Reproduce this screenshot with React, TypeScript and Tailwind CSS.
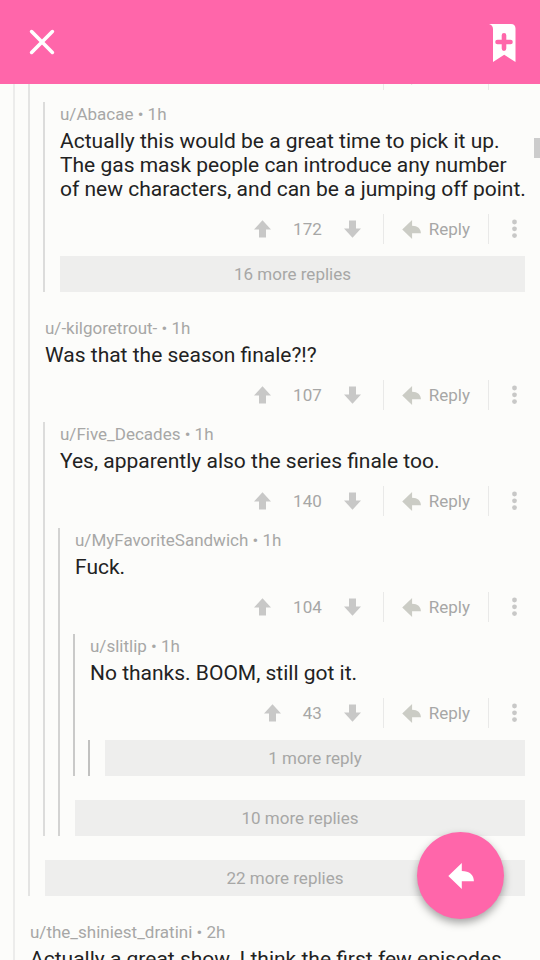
import React from "react";

type CommentData = {
  user: string;
  age: string;
  text: string;
  score: number;
  collapsed?: string;
  replies?: Item[];
};

type Item = CommentData | { more: string };

const gasMaskReplies: Item[] = [
  {
    user: "Abacae",
    age: "1h",
    text: "Actually this would be a great time to pick it up. The gas mask people can introduce any number of new characters, and can be a jumping off point.",
    score: 172,
    collapsed: "16 more replies",
  },
];

const finaleThread: Item[] = [
  {
    user: "-kilgoretrout-",
    age: "1h",
    text: "Was that the season finale?!?",
    score: 107,
    replies: [
      {
        user: "Five_Decades",
        age: "1h",
        text: "Yes, apparently also the series finale too.",
        score: 140,
        replies: [
          {
            user: "MyFavoriteSandwich",
            age: "1h",
            text: "Fuck.",
            score: 104,
            replies: [
              {
                user: "slitlip",
                age: "1h",
                text: "No thanks. BOOM, still got it.",
                score: 43,
                replies: [{ more: "1 more reply" }],
              },
            ],
          },
          { more: "10 more replies" },
        ],
      },
    ],
  },
  { more: "22 more replies" },
];

const nextThread: Item[] = [
  {
    user: "the_shiniest_dratini",
    age: "2h",
    text: "Actually a great show. I think the first few episodes",
    score: 58,
  },
];

const lineColors = [
  "border-[#ececeb]",
  "border-[#e4e4e3]",
  "border-[#dcdcdb]",
  "border-[#d3d3d2]",
  "border-[#cacac9]",
  "border-[#c1c1c0]",
];

function ArrowIcon({ down = false }: { down?: boolean }) {
  return (
    <svg
      viewBox="0 0 17 18"
      className={down ? "h-[18px] w-[17px] rotate-180" : "h-[18px] w-[17px]"}
      fill="currentColor"
      aria-hidden="true"
    >
      <path d="M8.5 0.2 17 9.4h-5V17.6H5V9.4H0z" />
    </svg>
  );
}

function ReplyIcon({ className }: { className: string }) {
  return (
    <svg viewBox="0 0 26 26" className={className} fill="currentColor" aria-hidden="true">
      <path d="M0.300 13 13.800 0v7.900C21.500 7.900 25.900 12 25.900 18.200H13.800V26z" />
    </svg>
  );
}

function Actions({ score }: { score: number }) {
  return (
    <div className="flex h-[30px] items-stretch justify-end text-[17px] leading-[30px] text-[#a7a7a6]">
      <div className="mr-[22px] flex items-center gap-[22px]">
        <button type="button" aria-label="Upvote" className="text-[#c8c8c7]">
          <ArrowIcon />
        </button>
        <span>{score}</span>
        <button type="button" aria-label="Downvote" className="text-[#c8c8c7]">
          <ArrowIcon down />
        </button>
      </div>
      <button
        type="button"
        className="flex items-center gap-2 border-x border-[#e9e9e8] px-[18px]"
      >
        <ReplyIcon className="h-[19px] w-[19px] text-[#cbccc5]" />
        Reply
      </button>
      <button
        type="button"
        aria-label="More options"
        className="flex w-[51px] items-center justify-center text-[#c8c8c7]"
      >
        <svg viewBox="0 0 5 20" className="h-5 w-[5px]" fill="currentColor" aria-hidden="true">
          <circle cx="2.5" cy="3" r="2.4" />
          <circle cx="2.5" cy="9.8" r="2.4" />
          <circle cx="2.5" cy="16.6" r="2.4" />
        </svg>
      </button>
    </div>
  );
}

function MoreButton({ label }: { label: string }) {
  return (
    <div className="px-[15px]">
      <button
        type="button"
        className="block h-9 w-full bg-[#eeeeed] text-center text-[17px] leading-9 text-[#a7a7a6]"
      >
        {label}
      </button>
    </div>
  );
}

function Comment({ user, age, text, score }: CommentData) {
  return (
    <article className="pb-3">
      <div className="mb-[13px] pr-3 pl-[15px]">
        <p className="mb-[3px] text-[17px] leading-6 text-[#a7a7a6]">
          u/{user} • {age}
        </p>
        <p className="text-[21px] leading-6 text-[#222222]">{text}</p>
      </div>
      <Actions score={score} />
    </article>
  );
}

function Branch({ depth, children }: { depth: number; children: React.ReactNode }) {
  return (
    <div className={`ml-[13px] flex flex-col gap-6 border-l-2 ${lineColors[depth]}`}>
      {children}
    </div>
  );
}

function Items({ items, depth }: { items: Item[]; depth: number }) {
  return (
    <>
      {items.map((item) =>
        "more" in item ? (
          <MoreButton key={item.more} label={item.more} />
        ) : (
          <div key={item.user}>
            <Comment {...item} />
            {item.collapsed && <MoreButton label={item.collapsed} />}
            {item.replies && (
              <Branch depth={depth + 1}>
                <Items items={item.replies} depth={depth + 1} />
              </Branch>
            )}
          </div>
        ),
      )}
    </>
  );
}

export default function App() {
  return (
    <div className="relative flex h-screen flex-col overflow-hidden bg-[#fcfcfa] font-[Roboto,sans-serif]">
      <header className="z-10 flex h-21 shrink-0 items-center justify-between bg-[#ff66aa] pr-6 pl-[29px] text-white">
        <button type="button" aria-label="Close">
          <svg
            viewBox="0 0 26 26"
            className="size-[26px]"
            stroke="currentColor"
            strokeWidth="3.6"
            strokeLinecap="round"
            aria-hidden="true"
          >
            <path d="M2.6 2.6 23.4 23.4M23.4 2.6 2.6 23.4" />
          </svg>
        </button>
        <button type="button" aria-label="Save thread">
          <svg viewBox="0 0 28 40" className="h-10 w-7" aria-hidden="true">
            <path
              d="M1 2H23C26 2 27.500 3.800 27.500 6.500V40L16.200 32.800 5 40V7C5 4.500 3.500 2.600 1 2z"
              fill="currentColor"
            />
            <path
              d="M16 13.200v13.400M9.500 20h13"
              stroke="#ff66aa"
              strokeWidth="4.600"
              strokeLinecap="round"
            />
          </svg>
        </button>
      </header>

      <main className="min-h-0 flex-1 overflow-hidden">
        <Branch depth={0}>
          <Branch depth={1}>
            <div>
              <div className="-mt-6 pb-3">
                <Actions score={216} />
              </div>
              <Branch depth={2}>
                <Items items={gasMaskReplies} depth={2} />
              </Branch>
            </div>
            <Items items={finaleThread} depth={1} />
          </Branch>
          <Items items={nextThread} depth={0} />
        </Branch>
      </main>

      <div className="absolute top-[138px] right-0 h-5 w-[6px] bg-[#cccccc]" />

      <button
        type="button"
        aria-label="Reply to post"
        className="absolute right-9 bottom-[41px] flex size-[87px] items-center justify-center rounded-full bg-[#ff66aa] text-white shadow-[0_4px_8px_rgba(0,0,0,0.35)]"
      >
        <ReplyIcon className="size-[26px]" />
      </button>
    </div>
  );
}
